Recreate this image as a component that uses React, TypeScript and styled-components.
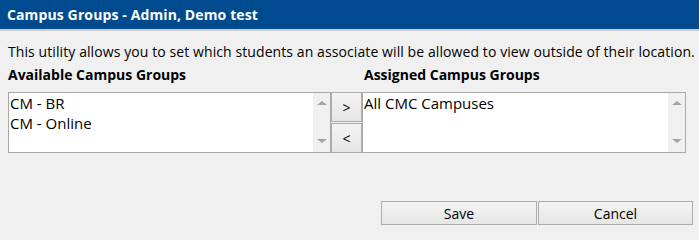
import React from "react";
import styled, { createGlobalStyle } from "styled-components";

const Global = createGlobalStyle`
  html, body { margin: 0; padding: 0; background: #f0f0f0; }
  body { font-family: "Open Sans", "Noto Sans", sans-serif; color: #000; }
`;

const Dialog = styled.div`
  width: 699px;
  height: 235px;
  display: flex;
  flex-direction: column;
  background: #f0f0f0;
`;

const TitleBar = styled.div`
  height: 31px;
  background: #004b8f;
  border-bottom: 2px solid #cfcfcf;
  color: #fff;
  font-weight: 700;
  font-size: 14px;
  letter-spacing: 0.12px;
  display: flex;
  align-items: center;
  padding-left: 7px;
  padding-bottom: 1px;
  box-sizing: border-box;
`;

const Body = styled.div`
  padding: 12px 0 0 8px;
  display: flex;
  flex-direction: column;
`;

const Description = styled.div`
  font-size: 14px;
  line-height: 18px;
  letter-spacing: 0.09px;
  white-space: nowrap;
`;

const Columns = styled.div`
  display: grid;
  grid-template-columns: 323px 31px 324px;
  grid-template-rows: auto 61px;
  margin-top: 5px;
`;

const Label = styled.div<{ $col: number }>`
  grid-column: ${(p) => p.$col};
  font-weight: 700;
  font-size: 14px;
  line-height: 18px;
  padding-left: ${(p) => (p.$col === 3 ? 2 : 0)}px;
  margin-bottom: 8px;
  white-space: nowrap;
`;

const ListBox = styled.div`
  border: 1px solid #a9a9a9;
  background: #fff;
  display: flex;
  box-sizing: border-box;
  height: 61px;
`;

const Items = styled.div`
  flex: 1;
  padding: 0 0 0 1px;
`;

const Item = styled.div`
  font-size: 15px;
  line-height: 20px;
  white-space: nowrap;
`;

const ScrollBar = styled.div`
  width: 17px;
  background: #f0f0f0;
  display: flex;
  flex-direction: column;
  justify-content: space-between;
  align-items: center;
  padding: 8px 0 9px;
`;

const Arrow = styled.div<{ $down?: boolean }>`
  width: 0;
  height: 0;
  border-left: 5px solid transparent;
  border-right: 5px solid transparent;
  ${(p) =>
    p.$down
      ? "border-top: 4px solid #a3a3a3;"
      : "border-bottom: 4px solid #a3a3a3;"}
`;

const MoveButtons = styled.div`
  display: flex;
  flex-direction: column;
  gap: 1px;
`;

const Button = styled.button<{ $w?: number; $h?: number }>`
  width: ${(p) => p.$w ?? 31}px;
  height: ${(p) => p.$h ?? 30}px;
  border: 1px solid #adadad;
  background: linear-gradient(#f3f3f3, #e6e6e6);
  font-family: inherit;
  font-size: 14px;
  color: #000;
  padding: 0;
  margin: 0;
  box-sizing: border-box;
  display: flex;
  align-items: center;
  justify-content: center;
`;

const Footer = styled.div`
  display: flex;
  gap: 1px;
  justify-content: flex-end;
  padding-right: 6px;
  margin-top: 48px;
`;

const List = ({ items }: { items: string[] }) => (
  <ListBox>
    <Items>
      {items.map((t) => (
        <Item key={t}>{t}</Item>
      ))}
    </Items>
    <ScrollBar>
      <Arrow />
      <Arrow $down />
    </ScrollBar>
  </ListBox>
);

export default function App() {
  return (
    <Dialog>
      <Global />
      <TitleBar>Campus Groups - Admin, Demo test</TitleBar>
      <Body>
        <Description>
          This utility allows you to set which students an associate will be allowed to view outside of their location.
        </Description>
        <Columns>
          <Label $col={1}>Available Campus Groups</Label>
          <Label $col={3}>Assigned Campus Groups</Label>
          <List items={["CM - BR", "CM - Online"]} />
          <MoveButtons>
            <Button>&gt;</Button>
            <Button>&lt;</Button>
          </MoveButtons>
          <List items={["All CMC Campuses"]} />
        </Columns>
      </Body>
      <Footer>
        <Button $w={156} $h={24}>Save</Button>
        <Button $w={155} $h={24}>Cancel</Button>
      </Footer>
    </Dialog>
  );
}
